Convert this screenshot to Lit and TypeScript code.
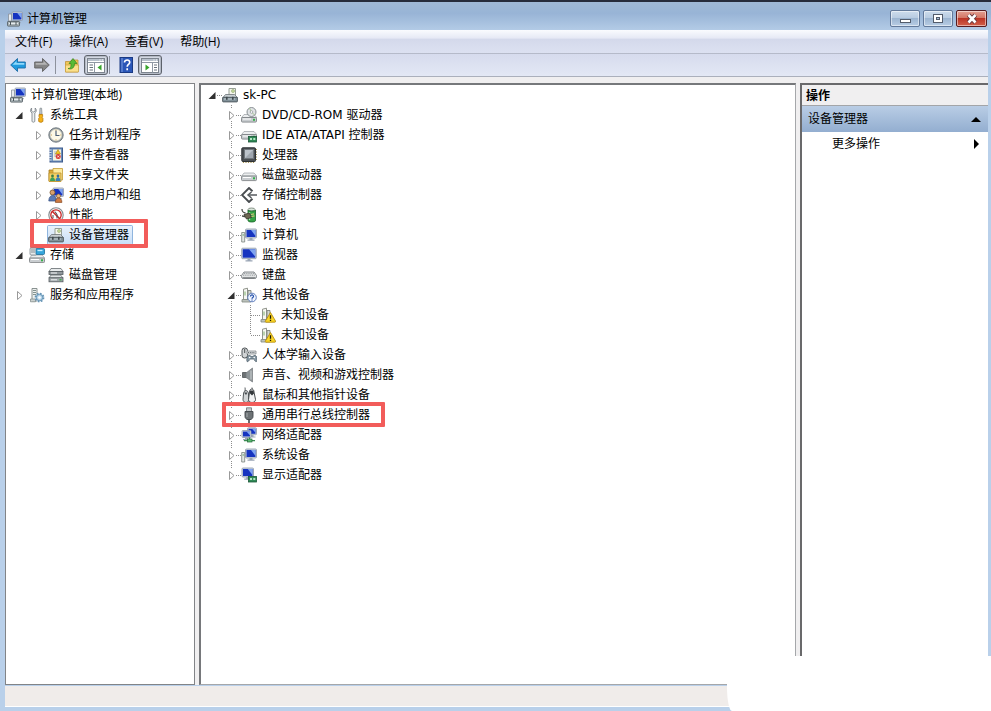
import { LitElement, html, svg, css, nothing, TemplateResult, SVGTemplateResult } from "lit";
import { customElement, property } from "lit/decorators.js";
import { classMap } from "lit/directives/class-map.js";

interface Node {
  label: string;
  icon: string;
  open?: boolean;
  selected?: boolean;
  marked?: boolean;
  children?: Node[];
}

const monitor = (x: number, y: number, w: number, h: number) => svg`
  <rect x=${x} y=${y} width=${w} height=${h} rx="1" fill="#d3dae4" stroke="#8995a8" stroke-width=".8"/>
  <rect x=${x + 1} y=${y + 1} width=${w - 2} height=${h - 2} fill="#1634c0"/>
  <path d="M${x + w / 2} ${y + 1}h${w / 2 - 1}v${h - 3}z" fill="#7fa4f0"/>
  <path d="M${x + w / 2 - 1.5} ${y + h}h3v1.6h2v1.2h-7v-1.2h2z" fill="#9aa5b5"/>`;

const drive = (y: number) => svg`
  <path d="M3 ${y}h10l3 3.2H.5z" fill="#eceeef" stroke="#9a9fa3" stroke-width=".7"/>
  <rect x=".5" y=${y + 3} width="15" height="4.6" rx="1" fill="#c9cdd0" stroke="#75797c" stroke-width=".8"/>
  <path d="M2 ${y + 4.5}h8" stroke="#fff"/>
  <rect x="12" y=${y + 4.3} width="2" height="2" fill="#36b04a"/>`;

const card = svg`
  <rect x="7.5" y="9.5" width="8" height="5.5" fill="#2f8a55" stroke="#1b5637" stroke-width=".8"/>
  <rect x="9" y="11" width="2" height="2" fill="#b6e6c6"/><rect x="12.3" y="11" width="2" height="2" fill="#b6e6c6"/>`;

const towers = svg`
  <path d="M2.5 2.2l4-1v11.6h-4z" fill="#f6f6f3" stroke="#85897f" stroke-width=".9"/>
  <path d="M7 3.5h3v10h-3z" fill="#d4d9d2" stroke="#7f857d" stroke-width=".9"/>
  <path d="M1 12.6h9v2.4H1z" fill="#c2c7c1" stroke="#7f857d" stroke-width=".8"/>
  <path d="M4 4.5v4" stroke="#7db26a"/>`;

const device = svg`
  <path d="M7 1.5h6.5v7H7z" fill="#f5f6ed" stroke="#8d968c" stroke-width=".9"/>
  <circle cx="11" cy="4" r="1.5" fill="#c8dc9c" stroke="#8ba36c" stroke-width=".6"/>
  <path d="M3.5 7.5h9l3 3H1z" fill="#c9d0d3" stroke="#6d7578" stroke-width=".8"/>
  <rect x=".6" y="10.3" width="14.8" height="4.6" rx=".6" fill="#82929a" stroke="#4b555a" stroke-width=".9"/>
  <path d="M2 12h11" stroke="#c3ced3"/>
  <rect x="4" y="9.8" width="1.6" height="3" fill="#414a4f"/><rect x="10" y="9.8" width="1.6" height="3" fill="#414a4f"/>`;

const icons: Record<string, SVGTemplateResult> = {
  manage: svg`${monitor(5, 1, 10.5, 8.5)}
    <path d="M1.5 3h3v7h-3z" fill="#e8ebef" stroke="#88919c" stroke-width=".8"/>
    <rect x=".5" y="10.5" width="12" height="4.6" rx=".6" fill="#a9b3b7" stroke="#5a646a" stroke-width=".9"/>
    <path d="M2 12.4h9" stroke="#eef2f3"/><path d="M3.5 11v3M9 11v3" stroke="#4c565b"/>`,
  tools: svg`
    <path d="M2.6 1C1 2.6 1.2 5 3 6v8.2c0 1.3 2.8 1.3 2.8 0V6c1.8-1 2-3.4.4-5v3L5 5H3.800L2.600 4z" fill="#eef1f3" stroke="#7f878c" stroke-width=".9"/>
    <path d="M11 1.2h1.6l.4 6h-2.4z" fill="#c8ced1" stroke="#7c8589" stroke-width=".7"/>
    <path d="M10 7.5h3.6v2l-.6.700.9 1v3c0 1.4-4.2 1.4-4.2 0v-3l.9-1-.6-.700z" fill="#f5b21b" stroke="#b87808" stroke-width=".8"/>`,
  clock: svg`<circle cx="8" cy="8" r="7.2" fill="#9aa3a8" stroke="#697277" stroke-width=".9"/>
    <circle cx="8" cy="8" r="5.7" fill="#fcf8e6" stroke="#d8d5c4" stroke-width=".6"/>
    <path d="M8 3.600V8.500h3.500" fill="none" stroke="#4d6078" stroke-width="1.2"/>
    <path d="M8 2.800v.8M8 12.400v.8M3 8h.8M12.400 8h.8" stroke="#c69a48"/>`,
  events: svg`<rect x="2" y="1" width="12.5" height="14" fill="#6e90bf" stroke="#3f5d8d"/>
    <rect x="5" y="2.5" width="8" height="11" fill="#f6f4df"/>
    <path d="M6 5h5M6 7h5M6 9h3" stroke="#8b9ab5" stroke-width=".7"/>
    <path d="M10 2.5l2.5 4.500h-5z" fill="#f5c626" stroke="#a9810d" stroke-width=".6"/>
    <circle cx="10.2" cy="9.5" r="2.5" fill="#d63431"/><path d="M9.200 8.500l2 2m0-2l-2 2" stroke="#fff" stroke-width=".8"/>
    <path d="M1 3h2.500M1 5.500h2.500M1 8h2.500M1 10.500h2.500M1 13h2.500" stroke="#dce5f2"/>`,
  shared: svg`<path d="M1 3h5l1.200 1.500H11V14H1z" fill="#dca936" stroke="#a57b1e" stroke-width=".8"/>
    <path d="M5 1.5h9.500V13H5z" fill="#fdea9d" stroke="#c39a33" stroke-width=".8"/>
    <path d="M1 6h12v8.500H1z" fill="#f4d165" stroke="#bb912b" stroke-width=".8"/>
    <circle cx="4.5" cy="9" r="1.4" fill="#3c7f43"/><path d="M2 14c0-5 5-5 5 0z" fill="#3fa057"/>
    <circle cx="10" cy="9" r="1.4" fill="#326a9e"/><path d="M7.500 14c0-5 5-5 5 0z" fill="#3a81b6"/>`,
  users: svg`${monitor(5, 1, 10.5, 8.5)}
    <circle cx="4.5" cy="5.5" r="2.5" fill="#d9a16d" stroke="#75502b" stroke-width=".8"/>
    <path d="M.8 14c0-7.500 7.500-7.500 7.500 0z" fill="#5a79b5" stroke="#344d80" stroke-width=".7"/>
    <circle cx="10.5" cy="9" r="2" fill="#e8b987" stroke="#85592e" stroke-width=".7"/>
    <path d="M7.400 15.400c0-6 6.500-6 6.500 0z" fill="#cf7b42" stroke="#84481f" stroke-width=".7"/>`,
  perf: svg`<circle cx="8" cy="8" r="7.2" fill="#f8f8f8" stroke="#858a8e" stroke-width="1.1"/>
    <circle cx="8" cy="8" r="5.2" fill="#fff" stroke="#c92626" stroke-width="1.3"/>
    <path d="M4.200 4.200l7.600 7.600" stroke="#c92626" stroke-width="1.6"/>
    <path d="M7 4.500l2 3v4M5 8v3" stroke="#424b50" fill="none"/>`,
  device,
  storage: svg`${drive(8)}
    <rect x="1" y="1" width="6.5" height="7" rx="1" fill="#e7eaeb" stroke="#7b858a" stroke-width=".8"/>
    <path d="M2 3h4M2 5h4" stroke="#838d92"/>
    <rect x="7" y="1.5" width="8.5" height="6" rx="1" fill="#36a5da" stroke="#1b6d99" stroke-width=".8"/>
    <path d="M8.500 3.500h5" stroke="#c8efff" stroke-width="1.3"/>`,
  disk: svg`<path d="M3 1.500h10l2 3H1z" fill="#e8ebec" stroke="#656c70" stroke-width=".8"/>
    <rect x="1" y="4.5" width="14" height="3" fill="#91989c" stroke="#545b5f" stroke-width=".8"/>
    <path d="M3 8h9.500l2.500 3H1z" fill="#dfe3e4" stroke="#656c70" stroke-width=".8"/>
    <rect x="1" y="10.8" width="14" height="4" fill="#a2a9ac" stroke="#545b5f" stroke-width=".8"/>
    <path d="M3 6h6M3 12.800h6" stroke="#f4f6f7"/><rect x="11.5" y="12" width="2" height="1.5" fill="#3ead4b"/>`,
  services: svg`<path d="M3 1.500h5V14H3z" fill="#edf0ef" stroke="#7d8685" stroke-width=".9"/>
    <path d="M4 3.500h3M4 5.500h3M4 7.500h3" stroke="#839390"/><path d="M1.500 12h5v2.800h-5z" fill="#cbd1cf" stroke="#7d8685" stroke-width=".7"/>
    <circle cx="10.5" cy="10.5" r="4" fill="#c5dcec" stroke="#6694b5" stroke-width="1.8" stroke-dasharray="1.6 1.54"/>
    <circle cx="10.5" cy="10.5" r="3.2" fill="#b9d6ea" stroke="#5688ab" stroke-width=".8"/><circle cx="10.5" cy="10.5" r="1.3" fill="#fff"/>`,
  dvd: svg`${drive(7.5)}
    <circle cx="10.5" cy="5" r="4.5" fill="#e0e3e5" stroke="#7d8488" stroke-width=".9"/>
    <path d="M10.500 5l-2-3.800M10.500 5l3 3" stroke="#a7c992"/><circle cx="10.5" cy="5" r="1.3" fill="#fff" stroke="#8c9397" stroke-width=".7"/>`,
  ide: svg`${drive(4.5)}${card}`,
  cpu: svg`<path d="M2.500 1v15M5 1v15M7.500 1v15M10 1v15M12.500 1v15" stroke="#a5935a" stroke-width="1.2"/>
    <path d="M1 2.500h15M1 5h15M1 7.500h15M1 10h15M1 12.500h15" stroke="#a5935a" stroke-width="1.2"/>
    <rect x=".8" y=".8" width="13.7" height="13.7" rx="1" fill="#4a4f53" stroke="#2d3134"/>
    <rect x="3.5" y="2.5" width="9" height="9" fill="#9fa6ae" stroke="#70767b"/><path d="M4 3h8l-8 8z" fill="#bcc3ca"/>`,
  hdd: drive(6),
  scsi: svg`<path d="M11.500 4.200L8 1 1 8l7 7 3.500-3.200" fill="none" stroke="#484c4f" stroke-width="1.900"/>
    <path d="M10.500 5L7 8l3.500 3" fill="none" stroke="#54595c" stroke-width="1.500"/>
    <path d="M8 8h8" stroke="#54595c" stroke-width="1.500"/>`,
  battery: svg`<ellipse cx="10.500" cy="2.500" rx="3.500" ry="1.500" fill="#dbe7dc" stroke="#5e6f60" stroke-width=".7"/>
    <path d="M7 3v10.500c0 2 7.500 2 7.500 0V3c0 1.500-7.500 1.500-7.500 0z" fill="#35a446" stroke="#186127" stroke-width=".8"/>
    <path d="M8.500 5v8" stroke="#a7eab2" stroke-width="1.300"/>
    <path d="M1 2c0 3 1 3.500 3.500 4M1 9c2 0 2 0 3 1" fill="none" stroke="#4a4e48" stroke-width="1.300"/>
    <path d="M3 7.500l5.500-1.500 2 4.500-5 1.500z" fill="#6d6751" stroke="#35342b" stroke-width=".8"/>
    <path d="M10 7.500l3-.700M10.500 9.500l3-.700" stroke="#d3c47a" stroke-width="1.200"/>`,
  computer: svg`${monitor(4.5, 2, 11, 9)}
    <path d="M.7 5.500h3v9.500h-3z" fill="#e3e7e4" stroke="#79837e" stroke-width=".8"/><path d="M1.600 8h1.300" stroke="#4e9c58"/>`,
  monitor: monitor(0.7, 1.2, 14.6, 10.5),
  keyboard: svg`<path d="M3 5h10l2.500 3.500v1.200c0 1.600-1 1.800-2 1.800h-11c-1 0-2-.200-2-1.800V8.500z" fill="#e2e4e5" stroke="#6b7073" stroke-width=".8"/>
    <path d="M3 6.600h10M2 8.200h12" stroke="#8d9295" stroke-width=".9" stroke-dasharray="1 .8"/><path d="M1.500 10.800h13" stroke="#6b7073"/>`,
  other: svg`${towers}<circle cx="11" cy="10.5" r="4.3" fill="#eff4ff" stroke="#5173b5" stroke-width=".9"/>
    <path d="M9.500 9.500c0-2.200 3.200-2 3 0-.1 1-1.500 1-1.500 2.200M11 12.600v1" fill="none" stroke="#2451aa" stroke-width="1.200"/>`,
  unknown: svg`${towers}<path d="M10.500 5.500l5 8.500c.3.600 0 1.200-.6 1.200H6c-.6 0-.9-.6-.6-1.200z" fill="#f9d526" stroke="#ae850d" stroke-width=".8"/>
    <path d="M10.500 8.300v3.500M10.500 12.700v1.300" stroke="#1d1a05" stroke-width="1.300"/>`,
  hid: svg`<rect x="1" y="1" width="5.500" height="10" rx="2.500" fill="#d1d4d6" stroke="#4d5356"/><path d="M3.700 2v4" stroke="#4d5356"/>
    <path d="M6 4h9v3H6z" fill="#dfe2e4" stroke="#757b7f" stroke-width=".7"/><path d="M7 5.500h7" stroke="#62686c" stroke-dasharray="1 .8"/>
    <path d="M6 14.500c-.5-2 0-6 2-6s1.500 1 3 1 1-1 3-1 2.500 4 1.500 6c-1 1-2-2-3-2.500h-3C8.500 12.500 7 15.500 6 14.500z" fill="#8597a3" stroke="#4c5d68" stroke-width=".8"/>
    <circle cx="8.700" cy="10.500" r=".8" fill="#fff"/><circle cx="13.200" cy="10.500" r=".8" fill="#fff"/>`,
  sound: svg`<path d="M1.500 5.500h4v5h-4z" fill="#6c7174" stroke="#4e5356" stroke-width=".8"/>
    <path d="M5 6L11.500 1v14L5 10.500z" fill="#8d9497" stroke="#74797c" stroke-width=".7"/><path d="M10 3.500v9" stroke="#c3c8ca" stroke-width="1.200"/>`,
  mouse: svg`<path d="M4 4c0-1.500.5-2.500 0-3.500M11 4c0-1.500.5-2.500 0-3.500" fill="none" stroke="#5d6265"/>
    <path d="M2.500 7c0-4.500 5-4.500 5 0l.5 5.500c0 4-6 4-6 0z" fill="#d2d5d6" stroke="#42474a" stroke-width=".9"/>
    <path d="M8.500 5c0-4 4.500-4 4.500 0l1.500 7.500c0 4-7 4-7 0z" fill="#f2f3f4" stroke="#33383b" stroke-width=".9"/>
    <path d="M9 3.500h3.500l.5 3-2 2-2-2z" fill="#33383b"/><path d="M3 5.500h3.500L5 8z" fill="#43484b"/>`,
  usb: svg`<path d="M5.500 .8h5v4h-5z" fill="#c6c9cb" stroke="#6b7073" stroke-width=".8"/>
    <path d="M4 4.500h8v5c0 2-1.500 2.500-2 3h-4c-.5-.5-2-1-2-3z" fill="#6d7275" stroke="#414649" stroke-width=".9"/>
    <path d="M6 6v4" stroke="#9ca1a3" stroke-width="1.200"/><path d="M8 12.500V16" stroke="#414649" stroke-width="1.600"/>`,
  network: svg`${monitor(6.5, 0.8, 9, 7)}${monitor(1, 3.5, 9, 7)}
    <path d="M8.500 10.500v3M3 13.600h11" stroke="#3b8c52" stroke-width="1.400"/><rect x="6.500" y="12" width="4.500" height="3" fill="#5bbb72" stroke="#26683a" stroke-width=".7"/>`,
  display: svg`${monitor(1, 1, 11.5, 9)}${card}`,
};

const glyph = (name: string) => html`<svg class="icon" viewBox="0 0 16 16" aria-hidden="true">${icons[name]}</svg>`;

@customElement("device-tree")
export class DeviceTree extends LitElement {
  @property({ attribute: false }) nodes: Node[] = [];
  @property({ type: Boolean }) lines = false;

  static styles = css`
    :host { display: block; }
    ul { list-style: none; margin: 0; padding: 0; }
    .branch { padding-left: 19px; }
    .guided { background: repeating-linear-gradient(#8c8c8c 0 1px, transparent 1px 2px) 9px 0 / 1px 100% no-repeat; }
    .row { display: flex; align-items: center; height: 20px; position: relative; }
    .cell { flex: none; display: block; width: 19px; height: 20px; padding: 0; border: 0; background: none; }
    .cell svg { display: block; width: 19px; height: 20px; }
    .item { display: flex; align-items: center; gap: 5px; height: 18px; padding-right: 3px; white-space: nowrap; }
    .selected { background: linear-gradient(#e9f2fc, #c8def7); box-shadow: 0 0 0 1px #8fb5de; border-radius: 1px; }
    .icon { flex: none; display: block; width: 16px; height: 16px; }
    .marked::after { content: ""; position: absolute; border: 4px solid #f25c5a; border-radius: 1px; pointer-events: none; }
    .plain .branch .branch { padding-left: 19px; }
    .plain > ul > li > .branch { padding-left: 0; }
    .plain > ul > li > .row > .cell { display: none; }
    .plain .marked::after { inset: -6px 46px -3px 1px; }
    .lined { font-family: "DejaVu Sans", "Noto Sans CJK SC", sans-serif; }
    .lined .marked::after { inset: -3px auto -2px 0; width: 155px; }
  `;

  private cell(n: Node, depth: number, last: boolean) {
    const guide = !this.lines ? nothing : depth
      ? svg`<path d=${`M9.5 0V${last ? 10 : 20}`} stroke="#8c8c8c" stroke-dasharray="1 1"/>
            <path d="M10 10.5H19" stroke="#8c8c8c" stroke-dasharray="1 1"/>`
      : svg`<path d="M14 10.5H19" stroke="#8c8c8c" stroke-dasharray="1 1"/>`;
    if (!n.children) return html`<span class="cell"><svg viewBox="0 0 19 20" aria-hidden="true">${guide}</svg></span>`;
    return html`<button class="cell" aria-label=${n.open ? "折叠" : "展开"}>
      <svg viewBox="0 0 19 20" aria-hidden="true">${guide}
        <rect x="5" y="4" width="9" height="12" fill="#fff"/>
        ${n.open ? svg`<path d="M12.5 7v7H5.500z" fill="#303030"/>` : svg`<path d="M7.500 6.500l4.500 4-4.500 4z" fill="#fff" stroke="#999"/>`}
      </svg></button>`;
  }

  private list(nodes: Node[], depth: number): TemplateResult {
    return html`<ul role=${depth ? "group" : "tree"}>${nodes.map((n, i) => {
      const last = i === nodes.length - 1;
      return html`<li role="treeitem">
        <div class=${classMap({ row: true, marked: !!n.marked })}>
          ${this.cell(n, depth, last)}
          <span class=${classMap({ item: true, selected: !!n.selected })}>${glyph(n.icon)}<span>${n.label}</span></span>
        </div>
        ${n.open && n.children
          ? html`<div class=${classMap({ branch: true, guided: this.lines && depth > 0 && !last })}>${this.list(n.children, depth + 1)}</div>`
          : nothing}
      </li>`;
    })}</ul>`;
  }

  render() {
    return html`<div class=${this.lines ? "lined" : "plain"}>${this.list(this.nodes, 0)}</div>`;
  }
}

const shut: Node[] = [];

const consoleTree: Node[] = [{
  label: "计算机管理(本地)", icon: "manage", open: true, children: [
    { label: "系统工具", icon: "tools", open: true, children: [
      { label: "任务计划程序", icon: "clock", children: shut },
      { label: "事件查看器", icon: "events", children: shut },
      { label: "共享文件夹", icon: "shared", children: shut },
      { label: "本地用户和组", icon: "users", children: shut },
      { label: "性能", icon: "perf", children: shut },
      { label: "设备管理器", icon: "device", selected: true, marked: true },
    ] },
    { label: "存储", icon: "storage", open: true, children: [{ label: "磁盘管理", icon: "disk" }] },
    { label: "服务和应用程序", icon: "services", children: shut },
  ],
}];

const devices: Node[] = [{
  label: "sk-PC", icon: "device", open: true, children: [
    { label: "DVD/CD-ROM 驱动器", icon: "dvd", children: shut },
    { label: "IDE ATA/ATAPI 控制器", icon: "ide", children: shut },
    { label: "处理器", icon: "cpu", children: shut },
    { label: "磁盘驱动器", icon: "hdd", children: shut },
    { label: "存储控制器", icon: "scsi", children: shut },
    { label: "电池", icon: "battery", children: shut },
    { label: "计算机", icon: "computer", children: shut },
    { label: "监视器", icon: "monitor", children: shut },
    { label: "键盘", icon: "keyboard", children: shut },
    { label: "其他设备", icon: "other", open: true, children: [
      { label: "未知设备", icon: "unknown" },
      { label: "未知设备", icon: "unknown" },
    ] },
    { label: "人体学输入设备", icon: "hid", children: shut },
    { label: "声音、视频和游戏控制器", icon: "sound", children: shut },
    { label: "鼠标和其他指针设备", icon: "mouse", children: shut },
    { label: "通用串行总线控制器", icon: "usb", marked: true, children: shut },
    { label: "网络适配器", icon: "network", children: shut },
    { label: "系统设备", icon: "computer", children: shut },
    { label: "显示适配器", icon: "display", children: shut },
  ],
}];

const arrow = (fill: string, light: string, edge: string) => svg`
  <path d="M.7 8L7.500 1.500V5H15.300v6H7.500v3.500z" fill=${fill} stroke=${edge} stroke-width=".9" stroke-linejoin="round"/>
  <path d="M2.500 7.700L6.500 4v2h7.800v1.700z" fill=${light}/>`;

const panel = (right: boolean) => svg`
  <rect x=".5" y="1.500" width="17" height="14" fill="#fff" stroke="#7d858f"/>
  <path d="M1 3h16" stroke="#b7c0cc" stroke-width="2"/><path d="M12.500 3h1M15 3h1" stroke="#fff"/>
  <path d=${right ? "M1 5.500h16M11.500 5.500v10" : "M1 5.500h16M7.500 5.500v10"} stroke="#8f98a4"/>
  <path d=${right ? "M13 8h3M13 10.500h3M13 13h3" : "M2.500 8h3.500M2.500 10.500h3.500M2.500 13h3.500"} stroke="#67707c"/>
  <path d=${right ? "M4.500 7.500l4 3-4 3z" : "M14.500 7.500l-4 3 4 3z"} fill="#37a42b"/>`;

@customElement("app-root")
export class AppRoot extends LitElement {
  static styles = css`
    :host {
      display: block;
      font: 12px/16px "Open Sans", "Noto Sans CJK SC", sans-serif;
      color: #000;
    }
    button { font: inherit; color: inherit; }
    .window {
      position: relative; box-sizing: border-box; min-height: 100vh; display: flex; flex-direction: column;
      border-top: 2px solid #272c3b; padding: 0 3px 4px 5px; background: #b9d0ea; overflow: hidden;
    }
    .titlebar { display: flex; align-items: center; gap: 4px; box-sizing: border-box; height: 28px; margin: 0 -3px 0 -5px; padding: 5px 4px 0 7px; background: linear-gradient(#a0b9d6, #98b4d6 40%, #b3cbe6); }
    .titlebar h1 { flex: 1; margin: 0; font-size: 12px; font-weight: 400; }
    .icon { flex: none; display: block; width: 16px; height: 16px; }
    .controls { display: flex; gap: 3px; }
    .control { box-sizing: border-box; display: grid; place-items: center; width: 30px; height: 17px; padding: 0; border: 1px solid #62799a; border-radius: 2px; background: linear-gradient(#cddcec, #b6cae0 50%, #9cb5d1 50%, #b8cde4); box-shadow: inset 0 0 0 1px #ffffff80; }
    .control svg { display: block; width: 14px; height: 12px; }
    .close { width: 31px; border-color: #571c20; background: linear-gradient(#e3a092, #d27261 50%, #bb3526 50%, #d2604a); }
    .menubar { display: flex; align-items: center; gap: 17px; height: 23px; padding: 0 10px; background: linear-gradient(#fafbfe, #e6e9f5 35%, #d4d9eb 40%, #dce1f1); border-bottom: 1px solid #b5bac9; }
    .menu { padding: 0; border: 0; background: none; white-space: nowrap; }
    .toolbar { display: flex; align-items: center; height: 22px; padding-left: 1px; background: linear-gradient(#d6dbed, #e3e8f5); border-bottom: 1px solid #abb0bc; }
    .tool { box-sizing: border-box; display: grid; place-items: center; width: 24px; height: 20px; padding: 0; border: 0; background: none; }
    .pressed { border: 1px solid #5d626b; border-radius: 3px; background: #d3d8e2; box-shadow: inset 0 0 0 1px #b5bbc6; }
    .pressed svg { display: block; width: 18px; height: 16px; }
    .rule { width: 1px; height: 18px; margin: 0 4px 0 1px; background: #8d929d; }
    .body { flex: 1; display: grid; grid-template-columns: 190px 1fr 188px; gap: 4px; padding-top: 6px; background: #f0eff0; }
    .pane { background: #fff; border: 1px solid #828487; overflow: hidden; min-width: 0; }
    .console { padding: 1px 0 0 4px; }
    .devices { border-width: 2px 1px 1px 2px; border-color: #76787b #a5a7aa #a5a7aa #76787b; padding-left: 2px; }
    .actions { border-width: 2px 0 0 2px; border-color: #69696b; }
    .actions h2 { margin: 0; padding: 3px 4px 0; height: 17px; font-size: 12px; font-weight: 700; background: #f0eff0; border-bottom: 1px solid #a3a5a8; }
    .action { display: flex; align-items: center; justify-content: space-between; width: 100%; height: 24px; padding: 0 7px 0 6px; border: 0; background: none; text-align: left; }
    .group { height: 26px; background: linear-gradient(#b9cde5, #93aed0); }
    .more { padding-left: 30px; }
    .action svg { display: block; width: 10px; height: 10px; }
    .status { height: 20px; margin-top: 1px; background: #f0ecea; border-bottom: 1px solid #fff; }
    .patch { position: absolute; right: 0; bottom: 0; width: 264px; height: 55px; background: #fff; border-bottom-left-radius: 5px 24px; }
  `;

  render() {
    return html`
      <div class="window">
        <header class="titlebar">
          ${glyph("manage")}
          <h1>计算机管理</h1>
          <div class="controls">
            <button class="control" aria-label="最小化"><svg viewBox="0 0 14 12"><rect x="2.500" y="6.500" width="10" height="3" fill="#fff" stroke="#535c6b"/></svg></button>
            <button class="control" aria-label="最大化"><svg viewBox="0 0 14 12"><rect x="2.500" y="1.500" width="9" height="8" fill="#fff" stroke="#535c6b"/><rect x="5.500" y="4.500" width="3" height="2" fill="#a9bfd9" stroke="#535c6b"/></svg></button>
            <button class="control close" aria-label="关闭"><svg viewBox="0 0 14 12"><path d="M3.500 2l7 7.500M10.500 2l-7 7.500" stroke="#5f343a" stroke-width="4.400"/><path d="M3.500 2l7 7.500M10.500 2l-7 7.500" stroke="#fff" stroke-width="2.600"/></svg></button>
          </div>
        </header>
        <nav class="menubar">
          ${["文件(F)", "操作(A)", "查看(V)", "帮助(H)"].map((m) => html`<button class="menu">${m}</button>`)}
        </nav>
        <div class="toolbar" role="toolbar">
          <button class="tool" aria-label="后退"><svg class="icon" viewBox="0 0 16 16">${arrow("#1f9ade", "#8ed8fa", "#1a6ca5")}</svg></button>
          <button class="tool" aria-label="前进"><svg class="icon" viewBox="0 0 16 16"><g transform="matrix(-1 0 0 1 16 0)">${arrow("#858585", "#b4b4b4", "#616161")}</g></svg></button>
          <span class="rule"></span>
          <button class="tool" aria-label="向上"><svg class="icon" viewBox="0 0 16 16">
            <path d="M1.500 4.500h5l1-1.500h6.500v12H1.500z" fill="#f0c75b" stroke="#bf9338" stroke-width=".8"/><path d="M1.500 8h13v7h-13z" fill="#fbe08b" stroke="#c99f41" stroke-width=".7"/>
            <path d="M4 11.500c3 0 3-2 3-5H5L9 1.500l4 5h-2.500c0 4-2.500 6.500-6.500 5z" fill="#58bb35" stroke="#37831d" stroke-width=".7"/></svg></button>
          <button class="tool pressed" aria-label="显示/隐藏控制台树"><svg viewBox="0 0 18 16">${panel(false)}</svg></button>
          <span class="rule"></span>
          <button class="tool" aria-label="帮助"><svg class="icon" viewBox="0 0 16 16">
            <rect x="2" y=".5" width="12.500" height="15" fill="#2a56b8" stroke="#1a3a83"/><path d="M4 1v14" stroke="#7d9fe2"/>
            <path d="M6.500 5.500c0-3.500 5.500-3.200 5.200 0-.2 2-2.500 2-2.500 4.300M9.200 11.200v2" fill="none" stroke="#fff" stroke-width="1.700"/></svg></button>
          <button class="tool pressed" aria-label="显示/隐藏操作窗格"><svg viewBox="0 0 18 16">${panel(true)}</svg></button>
        </div>
        <main class="body">
          <section class="pane console"><device-tree .nodes=${consoleTree}></device-tree></section>
          <section class="pane devices"><device-tree lines .nodes=${devices}></device-tree></section>
          <aside class="pane actions">
            <h2>操作</h2>
            <button class="action group"><span>设备管理器</span><svg viewBox="0 0 10 10"><path d="M0 8l5-5 5 5z"/></svg></button>
            <button class="action more"><span>更多操作</span><svg viewBox="0 0 10 10"><path d="M3 0l5 5-5 5z"/></svg></button>
          </aside>
        </main>
        <footer class="status"></footer>
        <div class="patch"></div>
      </div>`;
  }
}
